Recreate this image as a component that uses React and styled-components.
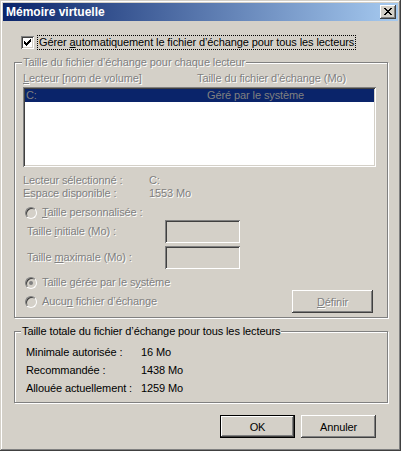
import React from 'react'
import styled, { createGlobalStyle } from 'styled-components'

const GlobalStyle = createGlobalStyle`
  html, body {
    margin: 0;
    padding: 0;
    background: #d4d0c8;
  }
  body {
    font-family: 'Liberation Sans', Arial, sans-serif;
    font-size: 11px;
  }
`

const Window = styled.div`
  box-sizing: border-box;
  width: 401px;
  height: 451px;
  padding: 3px;
  background: #d4d0c8;
  box-shadow: inset -1px -1px #404040, inset 1px 1px #d4d0c8,
    inset -2px -2px #808080, inset 2px 2px #ffffff;
  display: flex;
  flex-direction: column;
  color: #000;
  letter-spacing: -0.1px;
`

const TitleBar = styled.div`
  height: 18px;
  display: flex;
  align-items: center;
  padding: 0 2px 0 3px;
  background: linear-gradient(to right, #0a246a, #a6caf0);
`

const Title = styled.span`
  color: #fff;
  font-weight: bold;
  font-size: 12px;
  letter-spacing: 0;
`

const CloseBtn = styled.div`
  margin-left: auto;
  width: 16px;
  height: 14px;
  box-sizing: border-box;
  background: #d4d0c8;
  box-shadow: inset -1px -1px #404040, inset 1px 1px #ffffff,
    inset -2px -2px #808080, inset 2px 2px #d4d0c8;
  display: flex;
  align-items: center;
  justify-content: center;
  padding: 0 1px 1px 0;
`

const Body = styled.div`
  display: flex;
  flex-direction: column;
  padding: 0 10px 0 11px;
`

const CheckRow = styled.div`
  display: flex;
  align-items: center;
  gap: 3px;
  height: 15px;
  margin-top: 14px;
  padding-left: 7px;
`

const Sunken = styled.div`
  box-sizing: border-box;
  box-shadow: inset 1px 1px #808080, inset -1px -1px #ffffff,
    inset 2px 2px #404040, inset -2px -2px #d4d0c8;
`

const CheckBox = styled(Sunken)`
  width: 13px;
  height: 13px;
  background: #fff;
  display: flex;
  align-items: center;
  justify-content: center;
`

const FocusLabel = styled.span`
  border: 1px dotted #000;
  padding: 0 1px;
  line-height: 13px;
`

const U = styled.span`
  text-decoration: underline;
`

const Group = styled.fieldset`
  margin: ${p => p.$mt || 0}px 0 0 0;
  padding: ${p => p.$pad};
  border: 1px solid #808080;
  box-shadow: 1px 1px 0 #ffffff, inset 1px 1px 0 #ffffff;
  min-width: 0;
`

const Legend = styled.legend`
  margin-left: ${p => p.$ml}px;
  padding: 0 1px;
  line-height: 13px;
  background: #d4d0c8;
  color: ${p => (p.$disabled ? '#808080' : '#000')};
  text-shadow: ${p => (p.$disabled ? '1px 1px 0 #fff' : 'none')};
`

const Dim = styled.div`
  color: #808080;
  text-shadow: 1px 1px 0 #fff;
  line-height: 13px;
`

const HeaderRow = styled(Dim)`
  display: grid;
  grid-template-columns: 174px 1fr;
  margin-top: 3px;
`

const ListBox = styled(Sunken)`
  margin-top: 2px;
  width: 353px;
  height: 80px;
  padding: 2px;
  background: #fff;
`

const ListRow = styled.div`
  display: grid;
  grid-template-columns: 181px 1fr;
  height: 13px;
  line-height: 13px;
  padding-left: 1px;
  background: #0a246a;
  color: #808080;
`

const InfoGrid = styled(Dim)`
  display: grid;
  grid-template-columns: 126px 1fr;
  margin-top: 7px;
`

const RadioRow = styled(Dim)`
  display: flex;
  align-items: center;
  gap: 5px;
  height: 13px;
  margin: ${p => p.$mt || 0}px 0 0 2px;
`

const Radio = styled.span`
  box-sizing: border-box;
  width: 12px;
  height: 12px;
  border-radius: 50%;
  border: 1px solid;
  border-color: #808080 #ffffff #ffffff #808080;
  box-shadow: inset 1px 1px #404040, inset -1px -1px #d4d0c8;
  background: #d4d0c8;
  text-shadow: none;
  display: flex;
  align-items: center;
  justify-content: center;
  &::after {
    content: '';
    display: ${p => (p.$checked ? 'block' : 'none')};
    width: 4px;
    height: 4px;
    border-radius: 50%;
    background: #808080;
  }
`

const FieldRow = styled(Dim)`
  display: flex;
  align-items: center;
  height: 23px;
  padding-left: 4px;
  margin-top: ${p => p.$mt}px;
`

const FieldLabel = styled.span`
  width: 138px;
`

const FieldBox = styled(Sunken)`
  width: 75px;
  height: 23px;
  background: #d4d0c8;
`

const LastRow = styled.div`
  display: flex;
  align-items: center;
  justify-content: space-between;
  height: 23px;
  margin-top: 1px;
`

const Button = styled.button`
  box-sizing: border-box;
  width: ${p => p.$w || 75}px;
  height: 23px;
  padding: 0;
  margin: 0;
  background: #d4d0c8;
  border: ${p => (p.$default ? '1px solid #000' : 'none')};
  box-shadow: inset -1px -1px #404040, inset 1px 1px #ffffff,
    inset -2px -2px #808080, inset 2px 2px #d4d0c8;
  font: inherit;
  letter-spacing: inherit;
  color: ${p => (p.disabled ? '#808080' : '#000')};
  text-shadow: ${p => (p.disabled ? '1px 1px 0 #fff' : 'none')};
`

const TotalsGrid = styled.div`
  display: grid;
  grid-template-columns: 115px 1fr;
  grid-auto-rows: 18px;
  align-items: center;
  margin-top: 5px;
  line-height: 13px;
`

const ButtonRow = styled.div`
  display: flex;
  justify-content: flex-end;
  gap: 6px;
  margin-top: 12px;
  padding-right: 12px;
`

const CloseIcon = () => (
  <svg width="8" height="7" viewBox="0 0 8 7" shapeRendering="crispEdges">
    <path
      fill="#000"
      d="M0 0h2v1h-2zM6 0h2v1h-2zM1 1h2v1h-2zM5 1h2v1h-2zM2 2h4v1h-4zM3 3h2v1h-2zM2 4h4v1h-4zM1 5h2v1h-2zM5 5h2v1h-2zM0 6h2v1h-2zM6 6h2v1h-2z"
    />
  </svg>
)

const CheckMark = () => (
  <svg width="7" height="7" viewBox="0 0 7 7" shapeRendering="crispEdges">
    <path
      fill="#000"
      d="M6 0h1v1h-1zM5 1h2v1h-2zM0 2h1v1h-1zM4 2h3v1h-3zM0 3h2v1h-2zM3 3h3v1h-3zM0 4h5v1h-5zM1 5h3v1h-3zM2 6h1v1h-1z"
    />
  </svg>
)

const totals = [
  ['Minimale autorisée :', '16 Mo'],
  ['Recommandée :', '1438 Mo'],
  ['Allouée actuellement :', '1259 Mo'],
]

export default function App() {
  return (
    <>
      <GlobalStyle />
      <Window>
        <TitleBar>
          <Title>Mémoire virtuelle</Title>
          <CloseBtn>
            <CloseIcon />
          </CloseBtn>
        </TitleBar>
        <Body>
          <CheckRow>
            <CheckBox>
              <CheckMark />
            </CheckBox>
            <FocusLabel>
              Gérer <U>a</U>utomatiquement le fichier d’échange pour tous les lecteurs
            </FocusLabel>
          </CheckRow>

          <Group $mt={6} $pad="0 14px 4px 8px">
            <Legend $ml={-1} $disabled>
              Taille du fichier d’échange pour chaque lecteur
            </Legend>
            <HeaderRow>
              <span>
                <U>L</U>ecteur [nom de volume]
              </span>
              <span>Taille du fichier d’échange (Mo)</span>
            </HeaderRow>
            <ListBox>
              <ListRow>
                <span>C:</span>
                <span>Géré par le système</span>
              </ListRow>
            </ListBox>
            <InfoGrid>
              <span>Lecteur sélectionné :</span>
              <span>C:</span>
              <span>Espace disponible :</span>
              <span>1553 Mo</span>
            </InfoGrid>
            <RadioRow $mt={6}>
              <Radio />
              <span>
                <U>T</U>aille personnalisée :
              </span>
            </RadioRow>
            <FieldRow $mt={1}>
              <FieldLabel>
                Taille <U>i</U>nitiale (Mo) :
              </FieldLabel>
              <FieldBox />
            </FieldRow>
            <FieldRow $mt={3}>
              <FieldLabel>
                Taille <U>m</U>aximale (Mo) :
              </FieldLabel>
              <FieldBox />
            </FieldRow>
            <RadioRow $mt={7}>
              <Radio $checked />
              <span>
                Taille gérée par le s<U>y</U>stème
              </span>
            </RadioRow>
            <LastRow>
              <RadioRow>
                <Radio />
                <span>
                  Aucu<U>n</U> fichier d’échange
                </span>
              </RadioRow>
              <Button $w={81} disabled>
                <U>D</U>éfinir
              </Button>
            </LastRow>
          </Group>

          <Group $mt={7} $pad="0 10px 5px 11px">
            <Legend $ml={-5}>Taille totale du fichier d’échange pour tous les lecteurs</Legend>
            <TotalsGrid>
              {totals.map(([label, value]) => (
                <React.Fragment key={label}>
                  <span>{label}</span>
                  <span>{value}</span>
                </React.Fragment>
              ))}
            </TotalsGrid>
          </Group>

          <ButtonRow>
            <Button $default>OK</Button>
            <Button>Annuler</Button>
          </ButtonRow>
        </Body>
      </Window>
    </>
  )
}
